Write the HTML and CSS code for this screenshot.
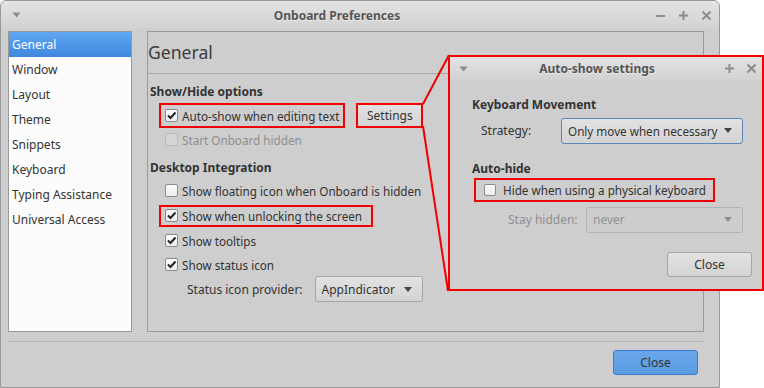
FILE: index.html
```html
<!DOCTYPE html>
<html lang="en">
<head>
    <meta charset="UTF-8">
    <title>Onboard Preferences</title>
    <link rel="stylesheet" href="styles.css">
</head>
<body>
    <div class="desktop">
        <div class="window main-window">
            <div class="titlebar">
                <span class="tb-menu"><svg width="9" height="6" viewBox="0 0 9 6"><path d="M0.5 0.5h8L4.5 5.5z" fill="#8c8c8c"/></svg></span>
                <span class="tb-title">Onboard Preferences</span>
                <span class="tb-buttons">
                    <svg width="11" height="11" viewBox="0 0 11 11"><path d="M1 6h9" stroke="#8c8c8c" stroke-width="2"/></svg>
                    <svg width="11" height="11" viewBox="0 0 11 11"><path d="M1 5.5h9M5.5 1v9" stroke="#8c8c8c" stroke-width="2"/></svg>
                    <svg width="11" height="11" viewBox="0 0 11 11"><path d="M1.5 1.5l8 8M9.5 1.5l-8 8" stroke="#8c8c8c" stroke-width="2"/></svg>
                </span>
            </div>
            <div class="content">
                <ul class="sidebar">
                    <li class="selected">General</li>
                    <li>Window</li>
                    <li>Layout</li>
                    <li>Theme</li>
                    <li>Snippets</li>
                    <li>Keyboard</li>
                    <li>Typing Assistance</li>
                    <li>Universal Access</li>
                </ul>
                <div class="panel">
                    <div class="panel-head">General</div>
                    <div class="panel-body">
                        <div class="section-title first">Show/Hide options</div>
                        <div class="row row-first">
                            <label class="check hl hl-tall">
                                <span class="box checked"><svg width="11" height="11" viewBox="0 0 11 11"><path d="M2 5.5l2.5 2.5L9.5 2.5" fill="none" stroke="#222" stroke-width="2"/></svg></span>
                                Auto-show when editing text
                            </label>
                            <button class="btn btn-settings">Settings</button>
                        </div>
                        <div class="row row-short">
                            <label class="check disabled"><span class="box"></span>Start Onboard hidden</label>
                        </div>

                        <div class="section-title">Desktop Integration</div>
                        <div class="row">
                            <label class="check"><span class="box"></span>Show floating icon when Onboard is hidden</label>
                        </div>
                        <div class="row">
                            <label class="check hl hl-short">
                                <span class="box checked"><svg width="11" height="11" viewBox="0 0 11 11"><path d="M2 5.5l2.5 2.5L9.5 2.5" fill="none" stroke="#222" stroke-width="2"/></svg></span>
                                Show when unlocking the screen
                            </label>
                        </div>
                        <div class="row">
                            <label class="check">
                                <span class="box checked"><svg width="11" height="11" viewBox="0 0 11 11"><path d="M2 5.5l2.5 2.5L9.5 2.5" fill="none" stroke="#222" stroke-width="2"/></svg></span>
                                Show tooltips
                            </label>
                        </div>
                        <div class="row row-short">
                            <label class="check">
                                <span class="box checked"><svg width="11" height="11" viewBox="0 0 11 11"><path d="M2 5.5l2.5 2.5L9.5 2.5" fill="none" stroke="#222" stroke-width="2"/></svg></span>
                                Show status icon
                            </label>
                        </div>
                        <div class="row row-combo">
                            <span class="field-label">Status icon provider:</span>
                            <span class="btn combo combo-provider">AppIndicator<i class="arrow"></i></span>
                        </div>
                    </div>
                </div>
            </div>
            <div class="separator"></div>
            <div class="actions">
                <button class="btn btn-primary">Close</button>
            </div>
        </div>

        <!-- callout: auto-show settings dialog -->
        <div class="window popup">
            <div class="titlebar small">
                <span class="tb-menu"><svg width="9" height="6" viewBox="0 0 9 6"><path d="M0.5 0.5h8L4.5 5.5z" fill="#8c8c8c"/></svg></span>
                <span class="tb-title">Auto-show settings</span>
                <span class="tb-buttons">
                    <svg width="11" height="11" viewBox="0 0 11 11"><path d="M1 5.5h9M5.5 1v9" stroke="#8c8c8c" stroke-width="2"/></svg>
                    <svg width="11" height="11" viewBox="0 0 11 11"><path d="M1.5 1.5l8 8M9.5 1.5l-8 8" stroke="#8c8c8c" stroke-width="2"/></svg>
                </span>
            </div>
            <div class="popup-body">
                <div class="section-title">Keyboard Movement</div>
                <div class="prow">
                    <span class="field-label">Strategy:</span>
                    <span class="btn combo combo-focus combo-strategy">Only move when necessary<i class="arrow"></i></span>
                </div>
                <div class="section-title autohide">Auto-hide</div>
                <div class="prow prow-check">
                    <label class="check hl hl-popup"><span class="box"></span>Hide when using a physical keyboard</label>
                </div>
                <div class="prow prow-stay">
                    <span class="field-label disabled">Stay hidden:</span>
                    <span class="btn combo combo-disabled combo-stay">never<i class="arrow"></i></span>
                </div>
                <div class="popup-actions">
                    <button class="btn btn-close">Close</button>
                </div>
            </div>
        </div>

        <svg class="callout-lines" width="764" height="388" viewBox="0 0 764 388">
            <path d="M423 104L449 55M423 126L448 291" stroke="#f00000" stroke-width="2" fill="none"/>
        </svg>
    </div>
</body>
</html>
```

FILE: styles.css
```css
* {
    box-sizing: border-box;
}
body {
    margin: 0;
    background: #fff;
    font-family: "Noto Sans", "DejaVu Sans", sans-serif;
    font-size: 12px;
    color: #333;
}
.desktop {
    position: relative;
    width: 764px;
    height: 388px;
    overflow: hidden;
}
.window {
    background: #cecece;
    border: 1px solid #999;
    display: flex;
    flex-direction: column;
}
.main-window {
    width: 720px;
    height: 388px;
    border-radius: 6px 6px 0 0;
}

/* title bars */
.titlebar {
    height: 28px;
    display: flex;
    align-items: center;
    padding: 0 7px 0 6px;
    background: linear-gradient(#e3e3e3, #d2d2d2);
    border-radius: 5px 5px 0 0;
}
.tb-menu {
    width: 18px;
    display: flex;
    justify-content: center;
}
.tb-title {
    flex: 1;
    text-align: center;
    font-weight: bold;
    color: #555;
    text-shadow: 0 1px 0 rgba(255,255,255,0.5);
    padding-right: 6px;
}
.tb-buttons {
    display: flex;
    gap: 12px;
}
.tb-buttons svg {
    display: block;
}

/* body of the main window */
.content {
    display: flex;
    gap: 15px;
    padding: 2px 15px 0 7px;
    height: 303px;
}
.sidebar {
    list-style: none;
    margin: 0;
    padding: 0;
    width: 124px;
    height: 301px;
    background: #fcfcfc;
    border: 1px solid #999;
}
.sidebar li {
    height: 25px;
    line-height: 25px;
    padding-left: 3px;
    white-space: nowrap;
}
.sidebar li.selected {
    background: linear-gradient(#60a6f2, #3e88de);
    color: #fff;
}
.panel {
    width: 557px;
    height: 301px;
    border: 1px solid #999;
}
.panel-head {
    height: 42px;
    line-height: 40px;
    font-size: 17.6px;
    color: #3c3c3c;
    border-bottom: 1px solid #a9a9a9;
}
.panel-body {
    padding-left: 2px;
}
.section-title {
    font-weight: bold;
    height: 20px;
    line-height: 20px;
    margin-top: 7px;
}
.section-title.first {
    margin-top: 8px;
}
.row {
    height: 25px;
    display: flex;
    align-items: center;
    padding-left: 15px;
}
.row-first {
    margin-top: 1px;
}
.row-short {
    height: 23px;
}
.row-combo {
    height: 26px;
    padding-left: 37px;
}
.check {
    display: inline-flex;
    align-items: center;
    gap: 4px;
    white-space: nowrap;
    height: 100%;
    font-size: 11.7px;
}
.check.disabled {
    color: #8e8e8e;
}
.box {
    width: 13px;
    height: 13px;
    border: 1px solid #8a8a8a;
    border-radius: 2px;
    background: linear-gradient(#fdfdfd, #ececec);
    display: flex;
    align-items: center;
    justify-content: center;
}
.disabled .box {
    border-color: #b9b9b9;
    background: #d6d6d6;
}

/* red highlight frames */
.hl {
    position: relative;
}
.hl::after {
    content: "";
    position: absolute;
    top: 0;
    bottom: 0;
    left: -6px;
    right: -6px;
    border: 2px solid #f00000;
}
.hl-tall {
    height: 25px;
}
.hl-short::after {
    top: 2px;
    bottom: 1px;
    right: -11px;
}
.hl-popup::after {
    left: -10px;
    right: -9px;
}

/* buttons and combos */
.btn {
    font-family: inherit;
    font-size: 12px;
    color: #333;
    background: linear-gradient(#e2e2e2, #d3d3d3);
    border: 1px solid #a6a6a6;
    border-radius: 3px;
    padding: 0;
}
.btn-settings {
    position: relative;
    margin-left: 17px;
    width: 67px;
    height: 25px;
}
.btn-settings::after {
    content: "";
    position: absolute;
    inset: -1px;
    border: 2px solid #f00000;
}
.field-label {
    white-space: nowrap;
}
.field-label.disabled {
    color: #8e8e8e;
}
.combo {
    display: flex;
    align-items: center;
    justify-content: space-between;
    height: 26px;
    padding: 0 10px 0 6px;
    white-space: nowrap;
}
.combo-provider {
    margin-left: 12px;
    width: 108px;
}
.arrow {
    width: 0;
    height: 0;
    border-left: 4px solid transparent;
    border-right: 4px solid transparent;
    border-top: 5px solid #444;
}
.combo-focus {
    border-color: #5b87b9;
    font-size: 11.7px;
}
.combo-disabled {
    color: #929292;
    background: #cdcdcd;
    border-color: #b3b3b3;
}
.combo-disabled .arrow {
    border-top-color: #8e8e8e;
}

.separator {
    height: 1px;
    background: #b6b6b6;
    margin: 9px 15px 0 7px;
}
.actions {
    display: flex;
    justify-content: flex-end;
    padding: 8px 21px 0 0;
}
.btn-primary {
    width: 85px;
    height: 25px;
    background: linear-gradient(#6aa7ea, #5b9be0);
    border-color: #3a7bd3;
}

/* auto-show settings dialog */
.popup {
    position: absolute;
    left: 448px;
    top: 55px;
    width: 316px;
    height: 236px;
    border: 2px solid #f00000;
}
.titlebar.small {
    height: 23px;
    border-radius: 0;
    padding: 0 5px 0 4px;
}
.titlebar.small .tb-title {
    padding-right: 2px;
}
.titlebar.small .tb-buttons {
    gap: 11px;
}
.popup-body {
    padding: 0 19px 0 22px;
}
.popup-body .section-title {
    margin-top: 15px;
}
.popup-body .section-title.autohide {
    margin-top: 16px;
}
.prow {
    display: flex;
    align-items: center;
    height: 25px;
    margin-top: 3px;
    padding-left: 9px;
}
.prow .combo {
    margin-left: auto;
}
.combo-strategy {
    width: 182px;
}
.combo-stay {
    width: 157px;
}
.prow-check {
    height: 24px;
    margin-top: -1px;
    padding-left: 12px;
}
.prow-check .check {
    gap: 7px;
}
.prow-check .box {
    width: 12px;
    height: 12px;
}
.prow-stay {
    margin-top: 5px;
    padding-left: 36px;
}
.popup-actions {
    display: flex;
    justify-content: flex-end;
    margin: 20px -9px 0 0;
}
.btn-close {
    width: 85px;
    height: 25px;
}
.callout-lines {
    position: absolute;
    left: 0;
    top: 0;
    pointer-events: none;
}
```
